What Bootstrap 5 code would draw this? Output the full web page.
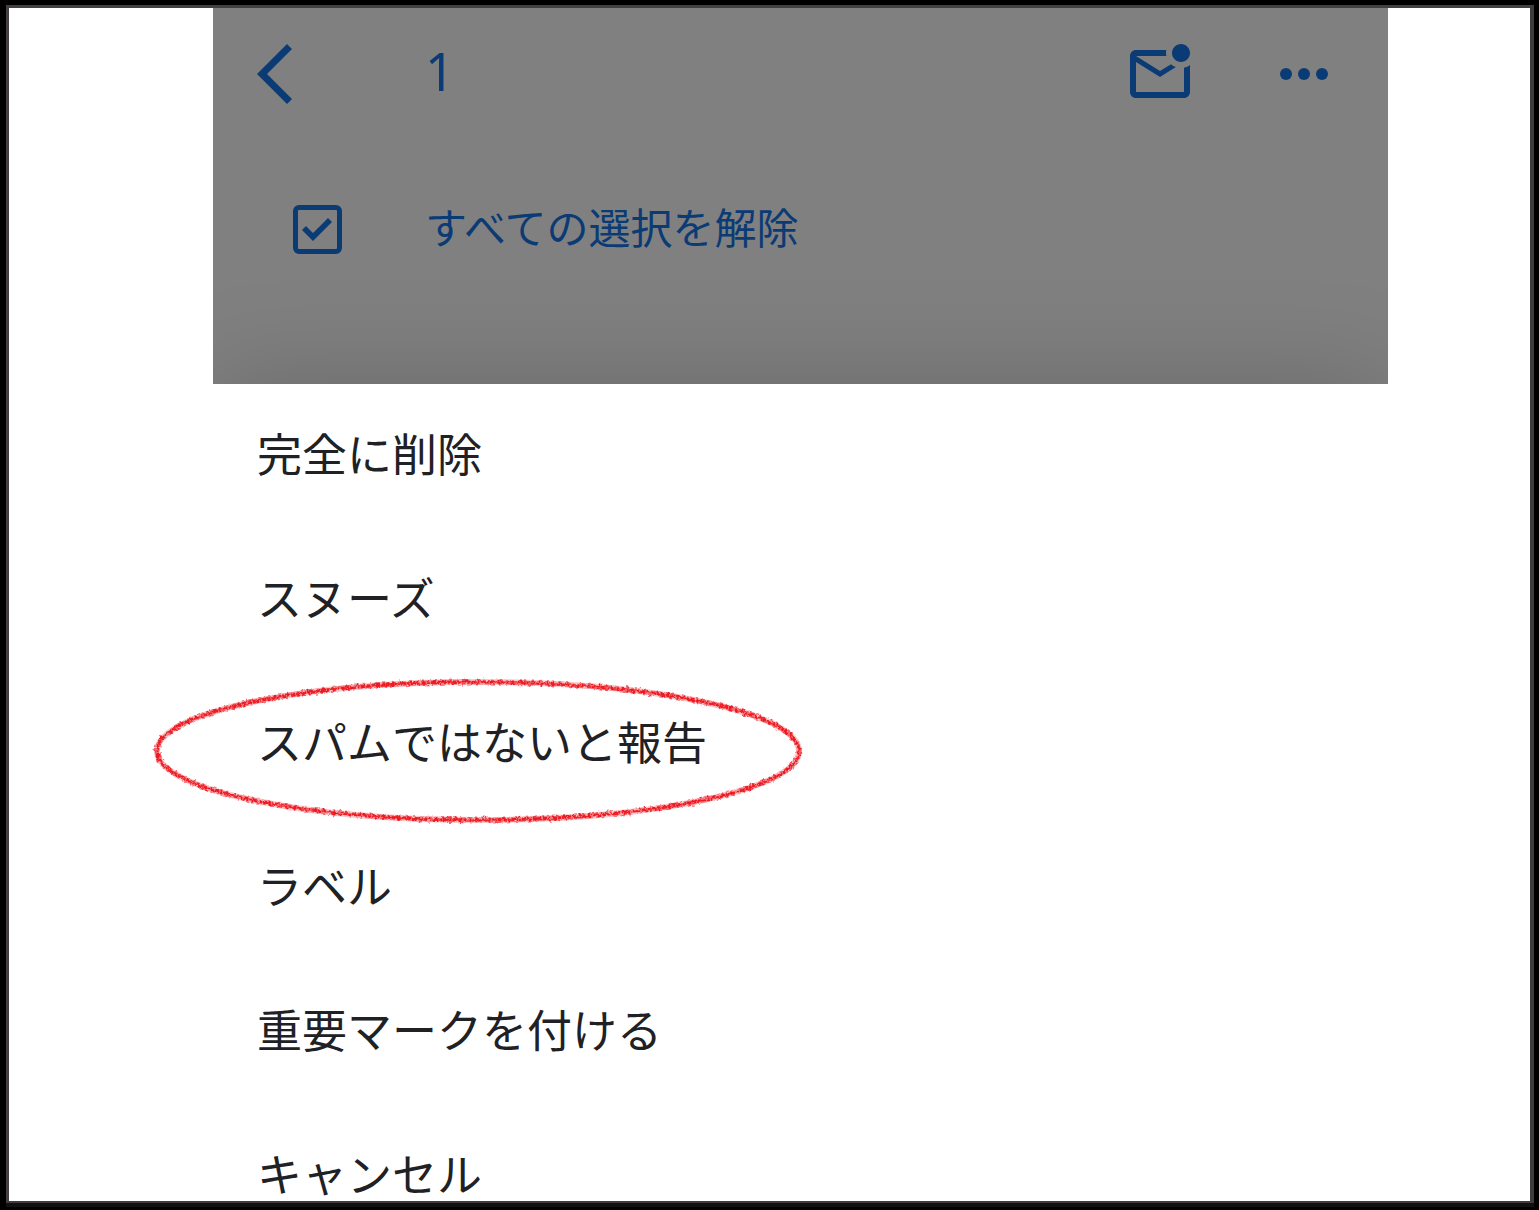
<!DOCTYPE html>
<html lang="ja">
<head>
<meta charset="utf-8">
<meta name="viewport" content="width=device-width, initial-scale=1">
<title>メール</title>
<link href="https://cdn.jsdelivr.net/npm/bootstrap@5.3.0/dist/css/bootstrap.min.css" rel="stylesheet">
<style>
  :root { --ink: #0b3b75; }
  body { background: #000; font-family: "Noto Sans", "Noto Sans CJK JP", sans-serif; }
  .frame { padding: 5px 5px 3px 6px; }
  .frame-line { border: 3px solid #444041; border-right: 4px solid #3d3d3d; border-bottom: 2px solid #3d3d3d; }
  .frame-base { height: 4px; background: #111; }
  .stage { padding: 0 142px 0 204px; }
  .dimmed { background: #808080; color: var(--ink); height: 376px; }
  .dimmed::after {
    content: ""; position: absolute; top: 100%; left: 0; right: 0; height: 800px;
    box-shadow: 0 0 100px rgba(0, 0, 0, .18);
  }
  .bar { height: 132px; padding: 0 48px 0 0; }
  .lead-cell { width: 212px; }
  .icon-button { width: 72px; height: 72px; color: inherit; background: none; border: 0; padding: 0; }
  .icon-button svg { display: block; width: 72px; height: 72px; fill: currentColor; }
  .back { display: block; margin-left: 26px; }
  .more { margin-left: 72px; }
  .tally { font-size: 52px; line-height: 72px; padding-bottom: 6px; }
  .select-row { height: 178px; font: 42px/60px "Noto Sans CJK JP", sans-serif; }
  .select-row label { padding-bottom: 6px; }
  .tick {
    appearance: none; width: 49px; height: 49px; margin: 0 0 0 80px;
    border: 5px solid var(--ink); border-radius: 6px;
    background: url("data:image/svg+xml,%3Csvg xmlns='http://www.w3.org/2000/svg' viewBox='0 0 49 49'%3E%3Cpath d='M9 25l11 11 19-19-4-4-15 15-7-7z' fill='%230b3b75'/%3E%3C/svg%3E") center / 49px 49px no-repeat border-box;
  }
  .action {
    padding: 44px 44px 50px; border: 0; background: none; color: #202124;
    font: 45px/50px "Noto Sans CJK JP", sans-serif; white-space: nowrap;
  }
  li:last-child .action { padding-bottom: 3px; }
  .pen-ring { left: -64px; top: 0; width: 660px; height: 156px; pointer-events: none; }
</style>
<script src="https://cdn.jsdelivr.net/npm/bootstrap@5.3.0/dist/js/bootstrap.bundle.min.js"></script>
</head>
<body>
<div class="frame min-vh-100 d-flex flex-column">
  <div class="frame-line bg-white flex-fill">
    <main class="stage">
      <header class="dimmed position-relative overflow-hidden">
        <div class="bar d-flex align-items-center">
          <div class="lead-cell">
            <button type="button" class="icon-button back" aria-label="戻る">
              <svg viewBox="0 0 72 72"><path d="M18 36L48 6l5 5-25 25 25 25-5 5z"/></svg>
            </button>
          </div>
          <span class="tally">1</span>
          <button type="button" class="icon-button ms-auto" aria-label="未読にする">
            <svg viewBox="0 0 24 24"><path d="M22 8.98V18c0 1.1-.9 2-2 2H4c-1.1 0-2-.9-2-2V6c0-1.1.9-2 2-2h10.1c-.06.32-.1.66-.1 1s.04.68.1 1H4l8 5 3.67-2.29c.47.43 1.02.76 1.63.98L12 13 4 8v10h16V9.9c.74-.15 1.42-.48 2-.92zM16 5c0 1.66 1.34 3 3 3s3-1.34 3-3-1.34-3-3-3-3 1.34-3 3z"/></svg>
          </button>
          <button type="button" class="icon-button more" aria-label="その他">
            <svg viewBox="0 0 24 24"><circle cx="6" cy="12" r="2"/><circle cx="12" cy="12" r="2"/><circle cx="18" cy="12" r="2"/></svg>
          </button>
        </div>
        <div class="select-row d-flex align-items-center">
          <div class="lead-cell d-flex"><input class="tick" type="checkbox" id="select-all" checked></div>
          <label for="select-all">すべての選択を解除</label>
        </div>
      </header>
      <ul class="list-unstyled mb-0">
        <li><button type="button" class="action d-block w-100 text-start">完全に削除</button></li>
        <li><button type="button" class="action d-block w-100 text-start">スヌーズ</button></li>
        <li class="position-relative">
          <button type="button" class="action d-block w-100 text-start">スパムではないと報告</button>
          <svg class="pen-ring position-absolute" viewBox="0 0 660 156" fill="none" aria-hidden="true">
            <defs>
              <filter id="crayon" x="-5%" y="-10%" width="110%" height="120%">
                <feTurbulence type="fractalNoise" baseFrequency=".3" numOctaves="2" seed="4" result="grain"/>
                <feDisplacementMap in="SourceGraphic" in2="grain" scale="6" xChannelSelector="R" yChannelSelector="G"/>
              </filter>
            </defs>
            <ellipse cx="329" cy="79" rx="321" ry="69" stroke="#fbc9cb" stroke-width="6"/>
            <g filter="url(#crayon)">
              <ellipse cx="329" cy="79" rx="321" ry="69" stroke="#f4797f" stroke-width="5"/>
              <ellipse cx="329" cy="79" rx="321" ry="69" stroke="#ed1c24" stroke-width="3" stroke-dasharray="5 1 3 1"/>
            </g>
          </svg>
        </li>
        <li><button type="button" class="action d-block w-100 text-start">ラベル</button></li>
        <li><button type="button" class="action d-block w-100 text-start">重要マークを付ける</button></li>
        <li><button type="button" class="action d-block w-100 text-start">キャンセル</button></li>
      </ul>
    </main>
  </div>
  <div class="frame-base"></div>
</div>
</body>
</html>
